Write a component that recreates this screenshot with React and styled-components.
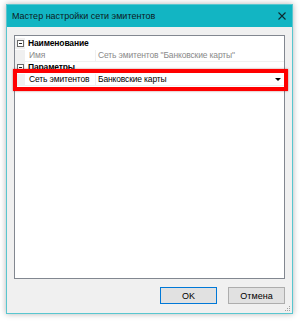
import React from "react";
import styled, { createGlobalStyle } from "styled-components";

const GlobalStyle = createGlobalStyle`
  html, body {
    margin: 0;
    padding: 0;
    background: #ffffff;
  }
  body {
    font-family: "Liberation Sans", Arial, sans-serif;
    font-size: 9px;
    color: #000;
  }
`;

const Page = styled.div`
  width: 300px;
  height: 321px;
  padding: 4px 0 0 6px;
  box-sizing: border-box;
`;

const Window = styled.div`
  width: 287px;
  height: 310px;
  box-sizing: border-box;
  border: 1px solid #58c6cf;
  background: #f0f0f0;
  box-shadow: 0 0 6px rgba(0, 0, 0, 0.3);
  display: flex;
  flex-direction: column;
  position: relative;
`;

const TitleBar = styled.div`
  height: 22px;
  flex: none;
  background: #12b5c3;
  display: flex;
  align-items: center;
  justify-content: space-between;
  padding: 0 6px 0 5px;
`;

const Title = styled.span`
  font-size: 9px;
  color: #0d1a1c;
`;

const Body = styled.div`
  flex: 1;
  display: flex;
  flex-direction: column;
  gap: 8px;
  padding: 8px 7px 9px 7px;
  min-height: 0;
`;

const Grid = styled.div`
  flex: 1;
  background: #fff;
  border: 1px solid #828790;
  position: relative;
  padding-top: 2px;
  font-size: 8.5px;
  letter-spacing: -0.15px;
`;

const Row = styled.div`
  height: 12px;
  display: grid;
  grid-template-columns: 10px 71px 1fr;
  box-sizing: border-box;
  border-bottom: 1px solid ${({ $category }) => ($category ? "#ffffff" : "#f0f0f0")};
`;

const Gutter = styled.div`
  background: #f0f0f0;
  display: flex;
  align-items: center;
  justify-content: center;
`;

const Toggle = styled.span`
  width: 7px;
  height: 7px;
  box-sizing: border-box;
  border: 1px solid #6a6a6a;
  background: #fff;
  position: relative;
  &::after {
    content: "";
    position: absolute;
    left: 1px;
    right: 1px;
    top: 2px;
    height: 1px;
    background: #222;
  }
`;

const CategoryText = styled.div`
  grid-column: 2 / 4;
  font-weight: bold;
  line-height: 11px;
  padding-left: 3px;
`;

const Label = styled.div`
  line-height: 11px;
  padding-left: 4px;
  color: ${({ $muted }) => ($muted ? "#8a8a8a" : "#000")};
  border-right: 1px solid #f0f0f0;
  white-space: nowrap;
  overflow: hidden;
`;

const Value = styled.div`
  line-height: 11px;
  padding-left: 2px;
  color: ${({ $muted }) => ($muted ? "#8a8a8a" : "#000")};
  white-space: nowrap;
  overflow: hidden;
  display: flex;
  align-items: center;
  justify-content: space-between;
  padding-right: 2px;
`;

const DropArrow = styled.span`
  width: 0;
  height: 0;
  border-left: 3px solid transparent;
  border-right: 3px solid transparent;
  border-top: 3px solid #000;
  margin-right: 1px;
`;

const Highlight = styled.div`
  position: absolute;
  left: -2px;
  top: 33px;
  width: 275px;
  height: 22px;
  box-sizing: border-box;
  border: 4px solid #ff0000;
  box-shadow: 0 0 2px rgba(120, 0, 0, 0.5);
  pointer-events: none;
`;

const Footer = styled.div`
  height: 17px;
  flex: none;
  display: flex;
  justify-content: flex-end;
  gap: 11px;
`;

const Button = styled.button`
  width: 57px;
  height: 17px;
  box-sizing: border-box;
  background: #e1e1e1;
  border: 1px solid ${({ $primary }) => ($primary ? "#0078d7" : "#adadad")};
  font-family: "Liberation Sans", Arial, sans-serif;
  font-size: 9px;
  color: #000;
  padding: 0;
`;

const Grip = styled.svg`
  position: absolute;
  right: 1px;
  bottom: 1px;
`;

const CloseIcon = () => (
  <svg width="8" height="8" viewBox="0 0 8 8">
    <path d="M0.5 0.5 L7.5 7.5 M7.5 0.5 L0.5 7.5" stroke="#0d2a2e" strokeWidth="1.1" />
  </svg>
);

export default function App() {
  return (
    <>
      <GlobalStyle />
      <Page>
        <Window>
          <TitleBar>
            <Title>Мастер настройки сети эмитентов</Title>
            <CloseIcon />
          </TitleBar>
          <Body>
            <Grid>
              <Row $category>
                <Gutter>
                  <Toggle />
                </Gutter>
                <CategoryText>Наименование</CategoryText>
              </Row>
              <Row>
                <Gutter />
                <Label $muted>Имя</Label>
                <Value $muted>Сеть эмитентов "Банковские карты"</Value>
              </Row>
              <Row $category>
                <Gutter>
                  <Toggle />
                </Gutter>
                <CategoryText>Параметры</CategoryText>
              </Row>
              <Row>
                <Gutter />
                <Label>Сеть эмитентов</Label>
                <Value>
                  Банковские карты
                  <DropArrow />
                </Value>
              </Row>
              <Highlight />
            </Grid>
            <Footer>
              <Button $primary>OK</Button>
              <Button>Отмена</Button>
            </Footer>
          </Body>
          <Grip width="6" height="6" viewBox="0 0 6 6">
            <rect x="4" y="0" width="1" height="1" fill="#a0a0a0" />
            <rect x="2" y="2" width="1" height="1" fill="#a0a0a0" />
            <rect x="4" y="2" width="1" height="1" fill="#a0a0a0" />
            <rect x="0" y="4" width="1" height="1" fill="#a0a0a0" />
            <rect x="2" y="4" width="1" height="1" fill="#a0a0a0" />
            <rect x="4" y="4" width="1" height="1" fill="#a0a0a0" />
          </Grip>
        </Window>
      </Page>
    </>
  );
}
